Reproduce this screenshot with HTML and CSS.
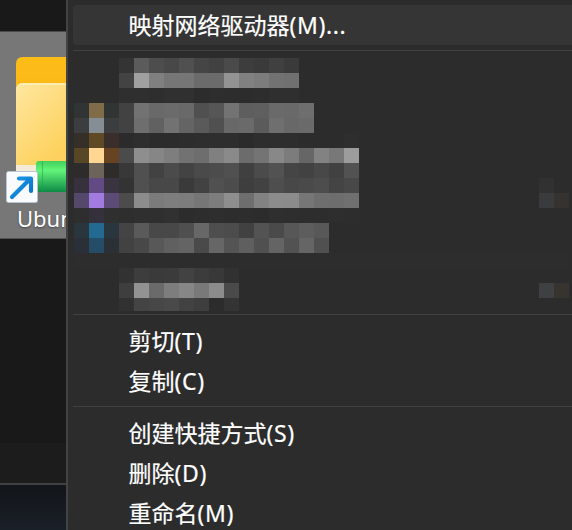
FILE: index.html
```html
<!DOCTYPE html>
<html lang="zh-CN">
<head>
<meta charset="utf-8">
<title>Menu</title>
<link rel="stylesheet" href="styles.css">
</head>
<body>
<div class="screen">
  <div class="desktop">
    <div class="window">
      <div class="file">
        <svg class="folder" width="66" height="146" viewBox="0 0 66 146">
          <defs>
            <linearGradient id="back" x1="0" y1="0" x2="0" y2="1"><stop offset="0" stop-color="#fdbd18"/><stop offset="1" stop-color="#f5b019"/></linearGradient>
            <linearGradient id="front" x1="0" y1="0" x2="0.6" y2="1"><stop offset="0" stop-color="#ffe7a0"/><stop offset="1" stop-color="#fdd15d"/></linearGradient>
            <linearGradient id="tube" x1="0" y1="0" x2="0" y2="1"><stop offset="0" stop-color="#42cf5c"/><stop offset=".3" stop-color="#62f47a"/><stop offset="1" stop-color="#0d8a46"/></linearGradient>
            <linearGradient id="arrow" x1="0" y1="0" x2="1" y2="1"><stop offset="0" stop-color="#1e9ae8"/><stop offset="1" stop-color="#0871c8"/></linearGradient>
          </defs>
          <path d="M16 133V32q0-7 7-7h43v108z" fill="url(#back)"/>
          <path d="M16 58q0-7 7-7h43v82H16z" fill="url(#front)"/>
          <path d="M17 57q1-5 6-5h43" fill="none" stroke="#ffefbd" stroke-width="1.4"/>
          <path d="M16 133h20v24H16z" fill="#f3ead8"/>
          <path d="M36 132q0-3 3-3h27v31H36z" fill="url(#tube)"/>
          <path d="M42.500 129v31" stroke="#219b48" stroke-opacity=".5"/>
          <rect x="6.500" y="139.500" width="31" height="31" rx="2" fill="#fafbfd" stroke="#b9c4d4"/>
          <path d="M12 165L30 147M19 146.500H31V159" fill="none" stroke="url(#arrow)" stroke-width="4.200" stroke-linecap="round" stroke-linejoin="round"/>
        </svg>
        <span class="name">Ubuntu</span>
      </div>
      <div class="status"></div>
    </div>
  </div>
  <div class="menu">
    <div class="item active"><span>映射网络驱动器<span class="key">(M)...</span></span></div>
    <div class="line"></div>
    <div class="mosaic" id="mosaic"></div>
    <div class="line"></div>
    <div class="group">
      <div class="item"><span>剪切<span class="key">(T)</span></span></div>
      <div class="item"><span>复制<span class="key">(C)</span></span></div>
    </div>
    <div class="line"></div>
    <div class="group">
      <div class="item"><span>创建快捷方式<span class="key">(S)</span></span></div>
      <div class="item"><span>删除<span class="key">(D)</span></span></div>
      <div class="item"><span>重命名<span class="key">(M)</span></span></div>
    </div>
  </div>
</div>
<script src="mosaic.js"></script>
</body>
</html>
```
FILE: styles.css
```css
* { box-sizing: border-box; }
body { margin: 0; background: #191919; }
.screen { display: flex; width: 572px; height: 530px; overflow: hidden; }
.desktop { width: 66px; flex: none; overflow: hidden; background: linear-gradient(#12151a 485px, #1a2027 530px); }
.window { height: 485px; padding-top: 31px; background: #191919; border-bottom: 2px solid #414141; display: flex; flex-direction: column; justify-content: space-between; }
.file { height: 208px; background: #777; border-top: 1px solid #4b4b4b; border-bottom: 1px solid #525252; overflow: hidden; }
.folder { display: block; overflow: visible; }
.name { display: block; width: 100px; padding-left: 17px; margin-top: 24px; color: #fff; font: 22px/32px "Noto Sans", sans-serif; text-shadow: 0 1px 2px #444; }
.status { height: 40px; background: #1c1c1c; }
.menu { flex: 1; min-width: 0; background: #2c2c2c; border-left: 2px solid #434343; padding: 5px 0 0 5px; }
.item { height: 40px; display: flex; align-items: center; padding-left: 55.5px; color: #fff; font: 23px/34px "Noto Sans", "Noto Sans CJK SC", sans-serif; white-space: nowrap; -webkit-text-stroke: 0.2px #fff; }
.key { letter-spacing: 0.6px; }
.active { background: #353535; border-radius: 4px 0 0 4px; margin-bottom: 5px; }
.line { height: 1px; background: #414141; }
.mosaic { display: grid; grid-template-columns: repeat(33, 15px); grid-template-rows: repeat(16, 15px) 13px; margin-left: 1px; padding: 7px 0 3px; }
.group { padding-top: 6px; padding-bottom: 5px; }
```
FILE: mosaic.js
```js
// Each row starts at a column; two digits are a grey level, six a full colour.
const rows = [
  [[3, "34 5b 4d 48 50 45 41 4a 3d 3a 40 3a"]],
  [[3, "43 a0 80 76 76 6b 6b 93 80 7c 72 70"]],
  [[3, "2f 2f 2e 30 30 2c 2e 2d 2c 2d 2f 2f"]],
  [[0, "303432 806c49 303432 42 72 69 6b 69 50 56 73 5e 5f 6a 69 6e"]],
  [[0, "3c3d3f 858d95 3b3d3f 42 6e 61 72 64 5a 50 68 6a 5b 6f 68 6a"]],
  [[0, "352f28 604a25 392e29 2b 2e 2c 2c 2d 2e 2e 2e 2b 2e 2e 2e 2c 2c 2c 2e"]],
  [[0, "574726 ffd793 674322 4b 8e 86 7e 72 6e 80 8a 6c 74 88 7c 66 82 78 9c"]],
  [[0, "2d2c2a 6c645b 2d2c2a 38 50 42 4b 43 4a 4c 50 40 4b 52 45 42 48 41 52"]],
  [[0, "36313c 624b85 3a3340 33 50 48 48 3a 42 50 4c 3e 42 4e 48 4a 4d 44 48"], [31, "31"]],
  [[0, "54496b a27be0 5c4b77 4c 8c 7b 7e 7c 76 7d 8e 6e 82 8c 8b 76 6e 6d 70"], [31, "3a3b3d 35322f"]],
  [[0, "2e 35313c 2f 2e 2f 2f 31 2c 2d 2e 2d 2d 2c 2f 2e 2d 2d 2e 2d"]],
  [[0, "2a363e 236a93 2a363e 44 5a 48 48 4f 67 4e 4c 41 53 4a 57 5d 58"]],
  [[0, "2b3038 264d68 2a3036 42 48 58 60 64 4a 66 54 5f 50 64 52 65 50"]],
  [[0, Array(33).fill("2d").join(" ")]],
  [[3, "32 3d 3a 3b 42 3c 38 31"]],
  [[3, "3e 92 6a 7d 86 79 8c 4a"], [31, "3f4042 37332f"]],
  [[3, "31 44 47 4a 42 3e 2c 34"]]
];
const grid = document.getElementById("mosaic");
for (const row of rows) {
  const cells = Array(33).fill("transparent");
  for (const [start, list] of row)
    list.split(" ").forEach((c, i) => { cells[start + i] = "#" + (c.length === 2 ? c + c + c : c); });
  for (const colour of cells) {
    const cell = document.createElement("div");
    cell.style.background = colour;
    grid.append(cell);
  }
}
```
